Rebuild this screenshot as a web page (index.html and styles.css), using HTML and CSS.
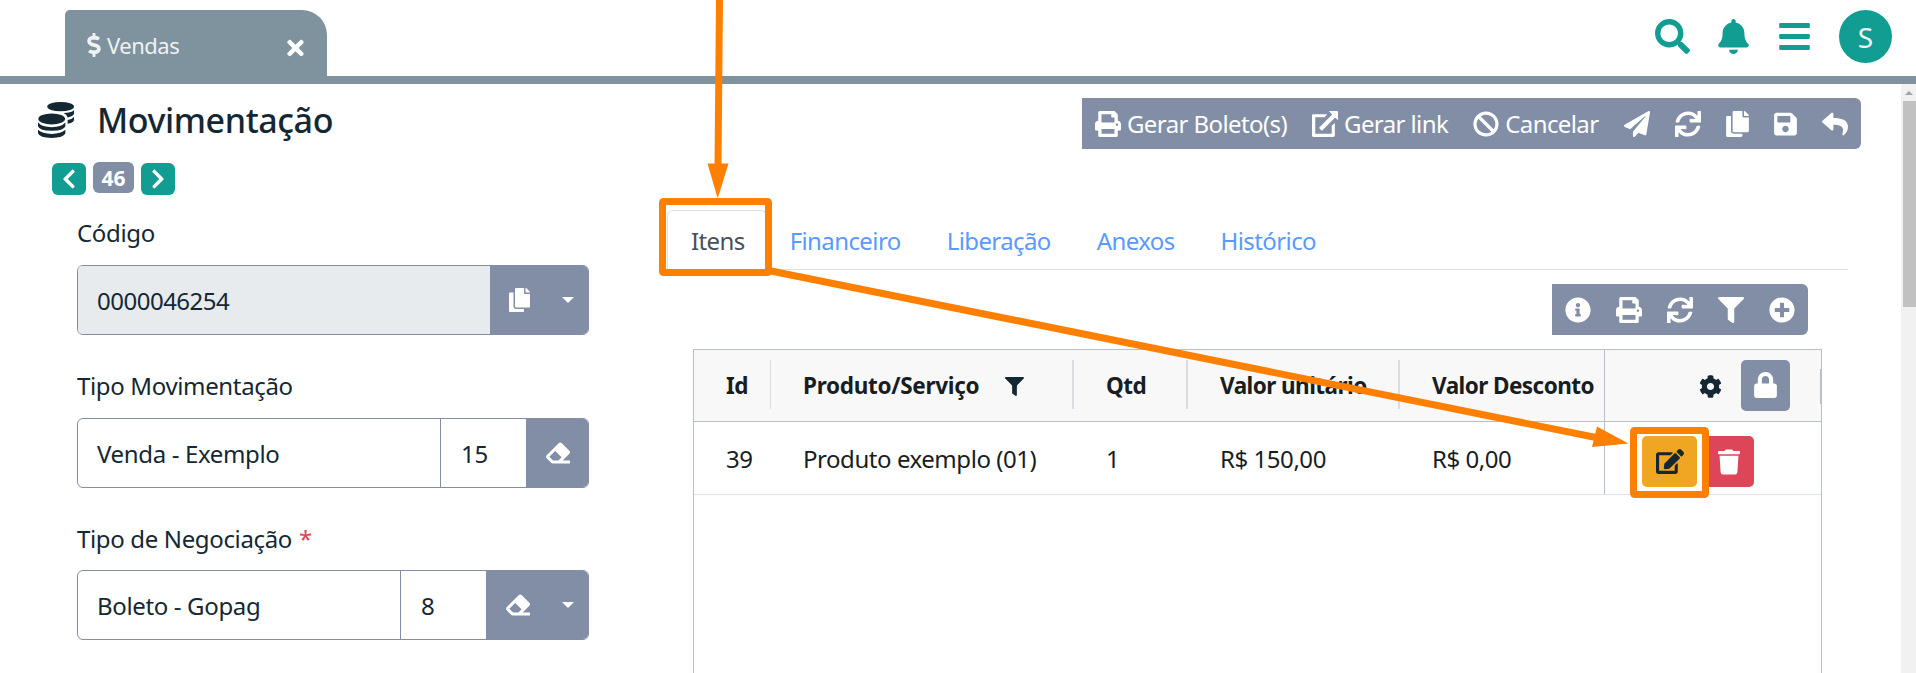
FILE: index.html
```html
<!DOCTYPE html>
<html lang="pt-BR">
<head>
<meta charset="utf-8">
<title>Movimentação</title>
<link rel="stylesheet" href="styles.css">
</head>
<body>
<svg class="sprite" width="0" height="0">
  <symbol id="search" viewBox="0 0 512 512"><path d="M505 442.7L405.3 343c-4.5-4.500-10.600-7-17-7H372c27.600-35.300 44-79.700 44-128C416 93.100 322.900 0 208 0S0 93.100 0 208s93.100 208 208 208c48.300 0 92.700-16.400 128-44v16.300c0 6.400 2.500 12.500 7 17l99.700 99.700c9.400 9.400 24.600 9.400 33.900 0l28.300-28.300c9.400-9.400 9.400-24.600.1-34zM208 336c-70.700 0-128-57.200-128-128 0-70.700 57.200-128 128-128 70.700 0 128 57.200 128 128 0 70.700-57.200 128-128 128z"/></symbol>
  <symbol id="bell" viewBox="0 0 448 512"><path d="M224 512c35.320 0 63.970-28.650 63.970-64H160.030c0 35.350 28.650 64 63.970 64zm215.390-149.710c-19.320-20.760-55.470-51.990-55.470-154.290 0-77.700-54.480-139.900-127.940-155.160V32c0-17.670-14.320-32-31.980-32s-31.980 14.330-31.980 32v20.840C118.560 68.100 64.080 130.300 64.080 208c0 102.300-36.150 133.530-55.470 154.290-6 6.450-8.660 14.160-8.610 21.710.11 16.400 12.980 32 32.100 32h383.800c19.120 0 32-15.600 32.100-32 .05-7.550-2.610-15.270-8.610-21.710z"/></symbol>
  <symbol id="bars" viewBox="0 0 448 512"><rect y="60" width="448" height="72" rx="16"/><rect y="220" width="448" height="72" rx="16"/><rect y="380" width="448" height="72" rx="16"/></symbol>
  <symbol id="times" viewBox="0 0 352 512"><path d="M242.720 256l100.070-100.070c12.280-12.280 12.280-32.190 0-44.480l-22.240-22.240c-12.280-12.280-32.190-12.280-44.480 0L176 189.280 75.930 89.210c-12.280-12.280-32.190-12.280-44.480 0L9.210 111.450c-12.280 12.280-12.280 32.190 0 44.480L109.280 256 9.210 356.070c-12.280 12.280-12.280 32.190 0 44.480l22.240 22.240c12.280 12.280 32.200 12.280 44.480 0L176 322.720l100.070 100.070c12.280 12.280 32.200 12.280 44.480 0l22.240-22.240c12.280-12.280 12.280-32.190 0-44.480L242.720 256z"/></symbol>
  <symbol id="dollar" viewBox="0 0 288 512"><path d="M209.200 233.400l-108-31.600C88.700 198.200 80 186.500 80 173.500c0-16.300 13.200-29.500 29.500-29.500h66.300c12.200 0 24.200 3.700 34.200 10.500 6.100 4.100 14.300 3.100 19.500-2l34.800-34c7.100-6.900 6.100-18.400-1.800-24.500C238 74.800 207.400 64.100 176 64V16c0-8.800-7.200-16-16-16h-32c-8.800 0-16 7.200-16 16v48h-2.500C45.800 64-5.400 118.700.5 183.600c4.200 46.100 39.400 83.600 83.800 96.600l102.500 30c12.500 3.700 21.200 15.300 21.200 28.300 0 16.300-13.200 29.500-29.500 29.500h-66.300C100 368 88 364.300 78 357.500c-6.100-4.100-14.300-3.100-19.500 2l-34.800 34c-7.100 6.900-6.100 18.400 1.800 24.500 24.500 19.200 55.100 29.900 86.500 30v48c0 8.800 7.200 16 16 16h32c8.800 0 16-7.200 16-16v-48.200c46.600-.9 90.300-28.600 105.700-72.700 21.500-61.600-14.600-124.800-72.500-141.700z"/></symbol>
  <symbol id="print" viewBox="0 0 512 512"><path d="M448 192V77.250c0-8.490-3.370-16.620-9.370-22.630L393.370 9.370c-6-6-14.140-9.370-22.630-9.370H96C78.330 0 64 14.330 64 32v160c-35.350 0-64 28.650-64 64v112c0 8.840 7.160 16 16 16h48v96c0 17.670 14.330 32 32 32h320c17.670 0 32-14.330 32-32v-96h48c8.840 0 16-7.160 16-16V256c0-35.350-28.650-64-64-64zm-64 256H128v-96h256v96zm0-224H128V64h192v48c0 8.840 7.160 16 16 16h48v96zm48 72c-13.250 0-24-10.750-24-24 0-13.260 10.750-24 24-24s24 10.740 24 24c0 13.250-10.750 24-24 24z"/></symbol>
  <symbol id="external" viewBox="0 0 512 512"><path d="M40 62H300L246 124H64V448H388V290L450 236V484Q450 512 422 512H28Q0 512 0 484V90Q0 62 28 62zM330 0H498Q512 0 512 14V182L456 128 206 378Q194 390 182 378L148 344Q136 332 148 320L398 70z"/></symbol>
  <symbol id="ban" viewBox="0 0 512 512"><path d="M256 8C119.034 8 8 119.033 8 256s111.034 248 248 248 248-111.034 248-248S392.967 8 256 8zm130.108 117.892c65.448 65.448 70 165.481 20.677 235.637L150.470 105.216c70.204-49.356 170.226-44.735 235.638 20.676zM125.892 386.108c-65.448-65.448-70-165.481-20.677-235.637L361.530 406.784c-70.203 49.356-170.226 44.736-235.638-20.676z"/></symbol>
  <symbol id="plane" viewBox="0 0 512 512"><path d="M476 3.200L12.500 270.600c-18.100 10.400-15.800 35.600 2.200 43.200L121 358.400l287.300-253.200c5.500-4.900 13.300 2.600 8.600 8.300L176 407v80.500c0 23.600 28.500 32.900 42.500 15.800L282 426l124.600 52.200c14.200 6 30.400-2.900 33-18.200l72-432C515 7.800 493.300-6.800 476 3.200z"/></symbol>
  <symbol id="sync" viewBox="0 0 512 512"><path d="M440.650 12.570l4 82.770A247.160 247.160 0 0 0 255.830 8C134.730 8 33.910 94.920 12.290 209.820A12 12 0 0 0 24.090 224h49.050a12 12 0 0 0 11.670-9.260 175.910 175.910 0 0 1 317-56.940l-101.460-4.860a12 12 0 0 0-12.570 12v47.410a12 12 0 0 0 12 12H500a12 12 0 0 0 12-12V12a12 12 0 0 0-12-12h-47.370a12 12 0 0 0-11.980 12.570zM255.830 432a175.610 175.610 0 0 1-146-77.800l101.800 4.870a12 12 0 0 0 12.570-12v-47.400a12 12 0 0 0-12-12H12a12 12 0 0 0-12 12V500a12 12 0 0 0 12 12h47.350a12 12 0 0 0 12-12.600l-4.150-82.570A247.170 247.170 0 0 0 255.830 504c121.110 0 221.930-86.920 243.550-201.820a12 12 0 0 0-11.800-14.180h-49.050a12 12 0 0 0-11.670 9.260A175.860 175.860 0 0 1 255.830 432z"/></symbol>
  <symbol id="copy" viewBox="0 0 448 512"><path d="M320 448v40c0 13.255-10.745 24-24 24H24c-13.255 0-24-10.745-24-24V120c0-13.255 10.745-24 24-24h72v296c0 30.879 25.121 56 56 56h168zm0-344V0H152c-13.255 0-24 10.745-24 24v368c0 13.255 10.745 24 24 24h272c13.255 0 24-10.745 24-24V128H344c-13.200 0-24-10.800-24-24zm120.971-31.029L375.029 7.029A24 24 0 0 0 358.059 0H352v96h96v-6.059a24 24 0 0 0-7.029-16.970z"/></symbol>
  <symbol id="save" viewBox="0 0 448 512"><path d="M433.941 129.941l-83.882-83.882A48 48 0 0 0 316.118 32H48C21.490 32 0 53.490 0 80v352c0 26.510 21.490 48 48 48h352c26.510 0 48-21.490 48-48V163.882a48 48 0 0 0-14.059-33.941zM224 416c-35.346 0-64-28.654-64-64 0-35.346 28.654-64 64-64s64 28.654 64 64c0 35.346-28.654 64-64 64zm96-304.520V212c0 6.627-5.373 12-12 12H76c-6.627 0-12-5.373-12-12V108c0-6.627 5.373-12 12-12h228.520c3.183 0 6.235 1.264 8.485 3.515l3.480 3.480A11.996 11.996 0 0 1 320 111.480z"/></symbol>
  <symbol id="reply" viewBox="0 0 512 512"><path d="M8.309 189.836L184.313 37.851C199.719 24.546 224 35.347 224 56.015v80.053c160.629 1.839 288 34.032 288 186.258 0 61.441-39.581 122.309-83.333 154.132-13.653 9.931-33.111-2.533-28.077-18.631 45.344-145.012-21.507-183.510-176.590-185.742V360c0 20.700-24.300 31.453-39.687 18.164l-176.004-152c-11.071-9.562-11.086-26.753 0-36.328z"/></symbol>
  <symbol id="filter" viewBox="0 0 512 512"><path d="M487.976 0H24.028C2.710 0-8.047 25.866 7.058 40.971L192 225.941V432c0 7.831 3.821 15.170 10.237 19.662l80 55.980C298.020 518.690 320 507.493 320 487.980V225.941l184.947-184.970C520.021 25.896 509.338 0 487.976 0z"/></symbol>
  <symbol id="info" viewBox="0 0 512 512"><path d="M256 8C119.043 8 8 119.083 8 256c0 136.997 111.043 248 248 248s248-111.003 248-248C504 119.083 392.957 8 256 8zm0 110c23.196 0 42 18.804 42 42s-18.804 42-42 42-42-18.804-42-42 18.804-42 42-42zm56 254c0 6.627-5.373 12-12 12h-88c-6.627 0-12-5.373-12-12v-24c0-6.627 5.373-12 12-12h12v-64h-12c-6.627 0-12-5.373-12-12v-24c0-6.627 5.373-12 12-12h64c6.627 0 12 5.373 12 12v100h12c6.627 0 12 5.373 12 12v24z"/></symbol>
  <symbol id="plus" viewBox="0 0 512 512"><path d="M256 8C119 8 8 119 8 256s111 248 248 248 248-111 248-248S393 8 256 8zm144 276c0 6.600-5.400 12-12 12h-92v92c0 6.600-5.400 12-12 12h-56c-6.600 0-12-5.400-12-12v-92h-92c-6.600 0-12-5.400-12-12v-56c0-6.600 5.400-12 12-12h92v-92c0-6.600 5.400-12 12-12h56c6.600 0 12 5.400 12 12v92h92c6.600 0 12 5.400 12 12v56z"/></symbol>
  <symbol id="cog" viewBox="0 0 512 512"><path d="M487.400 315.700l-42.600-24.600c4.300-23.200 4.300-47 0-70.200l42.600-24.600c4.900-2.800 7.100-8.600 5.500-14-11.100-35.600-30-67.800-54.700-94.600-3.800-4.100-10-5.100-14.800-2.300L380.800 110c-17.900-15.400-38.500-27.300-60.800-35.100V25.800c0-5.600-3.900-10.500-9.400-11.700-36.700-8.200-74.300-7.800-109.200 0-5.500 1.200-9.400 6.100-9.400 11.700V75c-22.200 7.900-42.800 19.800-60.800 35.100L88.700 85.500c-4.900-2.800-11-1.900-14.800 2.300-24.700 26.700-43.600 58.900-54.700 94.600-1.700 5.400.6 11.200 5.500 14L67.300 221c-4.300 23.200-4.300 47 0 70.200l-42.600 24.600c-4.900 2.800-7.100 8.600-5.500 14 11.100 35.600 30 67.800 54.700 94.600 3.800 4.100 10 5.100 14.800 2.300l42.600-24.600c17.900 15.400 38.500 27.300 60.800 35.100v49.200c0 5.600 3.900 10.500 9.400 11.700 36.700 8.200 74.300 7.800 109.200 0 5.500-1.200 9.400-6.100 9.400-11.700v-49.200c22.200-7.900 42.800-19.800 60.800-35.100l42.600 24.600c4.900 2.800 11 1.900 14.800-2.300 24.700-26.700 43.600-58.900 54.700-94.600 1.500-5.500-.7-11.300-5.600-14.100zM256 336c-44.100 0-80-35.900-80-80s35.900-80 80-80 80 35.900 80 80-35.900 80-80 80z"/></symbol>
  <symbol id="lock" viewBox="0 0 448 512"><path d="M400 224h-24v-72C376 68.200 307.800 0 224 0S72 68.200 72 152v72H48c-26.500 0-48 21.500-48 48v192c0 26.500 21.500 48 48 48h352c26.500 0 48-21.500 48-48V272c0-26.500-21.500-48-48-48zm-104 0H152v-72c0-39.700 32.300-72 72-72s72 32.300 72 72v72z"/></symbol>
  <symbol id="trash" viewBox="0 0 448 512"><path d="M432 32H312l-9.400-18.700A24 24 0 0 0 281.100 0H166.800a23.720 23.720 0 0 0-21.400 13.300L136 32H16A16 16 0 0 0 0 48v32a16 16 0 0 0 16 16h416a16 16 0 0 0 16-16V48a16 16 0 0 0-16-16zM32 128l21.200 339a48 48 0 0 0 47.900 45h245.800a48 48 0 0 0 47.900-45L416 128z"/></symbol>
  <symbol id="edit" viewBox="0 0 576 512"><path d="M402.600 83.200l90.200 90.200c3.800 3.800 3.800 10 0 13.800L274.400 405.600l-92.800 10.300c-12.400 1.400-22.900-9.100-21.500-21.500l10.300-92.800L388.800 83.200c3.800-3.800 10-3.800 13.800 0zm162-22.900l-48.800-48.800c-15.200-15.200-39.900-15.200-55.200 0l-35.400 35.400c-3.800 3.800-3.800 10 0 13.800l90.200 90.200c3.800 3.800 10 3.800 13.800 0l35.400-35.400c15.200-15.300 15.200-40 0-55.200zM384 346.200V448H64V128h229.800c3.200 0 6.200-1.300 8.500-3.500l40-40c7.600-7.600 2.200-20.500-8.500-20.500H48C21.500 64 0 85.500 0 112v352c0 26.500 21.500 48 48 48h352c26.500 0 48-21.500 48-48V306.200c0-10.700-12.900-16-20.500-8.500l-40 40c-2.200 2.300-3.500 5.300-3.500 8.500z"/></symbol>
  <symbol id="eraser" viewBox="0 0 512 512"><path d="M497.941 273.941c18.745-18.745 18.745-49.137 0-67.882l-160-160c-18.745-18.745-49.136-18.746-67.883 0l-256 256c-18.745 18.745-18.745 49.137 0 67.882l96 96A48.004 48.004 0 0 0 144 480h356c6.627 0 12-5.373 12-12v-40c0-6.627-5.373-12-12-12H355.883l142.058-142.059zm-302.627-62.627l137.373 137.373L265.373 416H150.628l-80-80 124.686-124.686z"/></symbol>
  <symbol id="chevron" viewBox="0 0 320 512"><path d="M34.520 239.030L228.870 44.690c9.370-9.370 24.570-9.370 33.940 0l22.670 22.670c9.360 9.360 9.370 24.520.04 33.900L131.490 256l154.020 154.750c9.340 9.380 9.320 24.540-.04 33.900l-22.670 22.670c-9.370 9.370-24.570 9.370-33.940 0L34.520 272.970c-9.370-9.370-9.370-24.570 0-33.940z"/></symbol>
  <symbol id="coins" viewBox="0 0 35 35"><ellipse cx="22" cy="4.500" rx="13" ry="4.500"/><ellipse cx="13.300" cy="16.500" rx="13" ry="5.300"/><path d="M25 10.800Q32 10.500 35 8V11.500Q34 14.200 28.800 15Q28.300 12.500 25 10.800zM28.800 17.500Q33 16.800 35 14.500V17.500Q34 20.500 28.800 21.200zM0 20Q4 24.500 13.300 24.500T26.600 20V23.500Q25 28 13.300 28T0 23.500zM0 27Q4 31 13.300 31T26.600 27V30.500Q25 35 13.300 35T0 30.500z"/></symbol>
</svg>

<header class="topbar">
  <div class="app-tab">
    <svg class="i-dollar"><use href="#dollar"/></svg>
    <span class="app-tab-name">Vendas</span>
    <svg class="i-times"><use href="#times"/></svg>
  </div>
  <div class="top-actions">
    <svg class="i-search"><use href="#search"/></svg>
    <svg class="i-bell"><use href="#bell"/></svg>
    <svg class="i-bars"><use href="#bars"/></svg>
    <span class="avatar">S</span>
  </div>
</header>

<div class="page">
  <main class="content">
    <section class="left">
      <h1 class="title"><svg class="i-coins"><use href="#coins"/></svg><span>Movimentação</span></h1>
      <div class="pager">
        <span class="page-btn"><svg class="i-chevron"><use href="#chevron"/></svg></span>
        <span class="page-count">46</span>
        <span class="page-btn"><svg class="i-chevron flip"><use href="#chevron"/></svg></span>
      </div>
      <form class="form">
        <label class="label">Código</label>
        <div class="group">
          <div class="field readonly">0000046254</div>
          <div class="addon addon-copy"><svg class="i-copy"><use href="#copy"/></svg><i class="caret"></i></div>
        </div>
        <label class="label">Tipo Movimentação</label>
        <div class="group">
          <div class="field">Venda - Exemplo</div>
          <div class="field code">15</div>
          <div class="addon addon-clear"><svg class="i-eraser"><use href="#eraser"/></svg></div>
        </div>
        <label class="label">Tipo de Negociação<span class="req">*</span></label>
        <div class="group">
          <div class="field">Boleto - Gopag</div>
          <div class="field code">8</div>
          <div class="addon addon-both"><svg class="i-eraser"><use href="#eraser"/></svg><i class="caret"></i></div>
        </div>
      </form>
    </section>

    <section class="right">
      <div class="toolbar main-tools">
        <span class="tool"><svg class="i-26"><use href="#print"/></svg><span>Gerar Boleto(s)</span></span>
        <span class="tool"><svg class="i-26"><use href="#external"/></svg><span>Gerar link</span></span>
        <span class="tool"><svg class="i-26"><use href="#ban"/></svg><span>Cancelar</span></span>
        <svg class="i-26"><use href="#plane"/></svg>
        <svg class="i-26"><use href="#sync"/></svg>
        <svg class="i-23"><use href="#copy"/></svg>
        <svg class="i-23"><use href="#save"/></svg>
        <svg class="i-26"><use href="#reply"/></svg>
      </div>
      <nav class="tabs">
        <a class="tab active">Itens</a>
        <a class="tab">Financeiro</a>
        <a class="tab">Liberação</a>
        <a class="tab">Anexos</a>
        <a class="tab">Histórico</a>
      </nav>
      <div class="toolbar grid-tools">
        <svg class="i-26"><use href="#info"/></svg>
        <svg class="i-26"><use href="#print"/></svg>
        <svg class="i-26"><use href="#sync"/></svg>
        <svg class="i-26"><use href="#filter"/></svg>
        <svg class="i-26"><use href="#plus"/></svg>
      </div>
      <div class="grid">
        <div class="grid-row grid-head">
          <div class="cell thin">Id</div>
          <div class="cell product">Produto/Serviço<svg class="i-filter"><use href="#filter"/></svg></div>
          <div class="cell">Qtd</div>
          <div class="cell">Valor unitário</div>
          <div class="cell last">Valor Desconto</div>
          <div class="cell actions head-actions"><svg class="i-cog"><use href="#cog"/></svg><span class="lock-btn"><svg class="i-lock"><use href="#lock"/></svg></span><i class="edge"></i></div>
        </div>
        <div class="grid-row grid-data">
          <div class="cell">39</div>
          <div class="cell">Produto exemplo (01)</div>
          <div class="cell">1</div>
          <div class="cell">R$ 150,00</div>
          <div class="cell last">R$ 0,00</div>
          <div class="cell actions"><span class="edit-btn"><svg class="i-edit"><use href="#edit"/></svg></span><span class="trash-btn"><svg class="i-trash"><use href="#trash"/></svg></span></div>
        </div>
      </div>
    </section>
  </main>
  <div class="scrollbar"><i class="scroll-up"></i><i class="scroll-thumb"></i></div>
</div>

<svg class="guide" viewBox="0 0 1916 673">
  <path class="guide-line" d="M719.500 -2L718 165M771 271L1596 437.500"/>
  <path class="guide-head" d="M707.500 163.500H728.500L717.700 198.500zM1597 426.500L1592 447L1628.500 443.500z"/>
  <rect class="guide-box" x="662.500" y="201.500" width="106" height="71" rx="1"/>
  <rect class="guide-box" x="1633.500" y="430.500" width="72" height="64" rx="1"/>
</svg>
</body>
</html>
```
FILE: styles.css
```css
* { box-sizing: border-box; }
body {
  margin: 0;
  width: 1916px;
  height: 673px;
  overflow: hidden;
  position: relative;
  background: #fff;
  color: #142833;
  font-family: "Noto Sans", "Open Sans", sans-serif;
  font-size: 24px;
  line-height: 36px;
}
svg { display: block; fill: currentColor; flex: none; }
span, .cell { white-space: nowrap; }
.sprite { position: absolute; }

.topbar {
  height: 84px;
  border-bottom: 8px solid #7e939e;
  display: flex;
  justify-content: space-between;
  padding: 10px 24px 0 65px;
}
.app-tab {
  width: 262px;
  height: 66px;
  background: #7e939e;
  border-radius: 5px 25px 0 0;
  color: #f0f1f2;
  display: flex;
  align-items: center;
  padding: 4px 23px 0 22px;
}
.app-tab-name { margin-left: 6px; font-size: 22px; letter-spacing: -0.5px; }
.i-dollar { width: 14px; height: 24px; }
.i-times { width: 17px; height: 24px; color: #fff; margin-left: auto; margin-top: 6px; }
.top-actions { display: flex; align-items: flex-start; color: #129d93; }
.i-search { width: 35px; height: 35px; margin: 9px 28px 0 0; }
.i-bell { width: 31px; height: 35px; margin: 9px 30px 0 0; }
.i-bars { width: 31px; height: 35px; margin: 9px 29px 0 0; }
.avatar {
  width: 53px;
  height: 53px;
  border-radius: 50%;
  background: #129d93;
  color: #f0f1f2;
  font-size: 28px;
  line-height: 54px;
  text-align: center;
}

.page { display: flex; height: 589px; }
.content { flex: 1; display: flex; }
.left { width: 660px; padding: 18px 0 0 38px; }
.title { display: flex; align-items: center; margin: 0; height: 35px; font-size: 34px; font-weight: 500; letter-spacing: -0.4px; }
.i-coins { width: 36px; height: 36px; margin-right: 23px; }
.pager { display: flex; gap: 7px; padding: 25px 0 0 14px; }
.page-btn {
  width: 34px;
  height: 32px;
  margin-top: 1px;
  border-radius: 6px;
  background: #129d93;
  color: #fff;
  display: flex;
  align-items: center;
  justify-content: center;
}
.i-chevron { width: 14px; height: 22px; }
.flip { transform: scaleX(-1); }
.page-count {
  width: 41px;
  height: 31px;
  border-radius: 6px;
  background: #828ea6;
  color: #fff;
  font-size: 21px;
  font-weight: 700;
  line-height: 33px;
  text-align: center;
}
.form { padding: 19px 0 0 39px; letter-spacing: -0.35px; }
.label { display: block; height: 51px; padding-top: 1px; }
.req { color: #dd4558; margin-left: 7px; }
.group {
  width: 512px;
  height: 70px;
  margin-bottom: 32px;
  border: 1px solid #828ea6;
  border-radius: 6px;
  overflow: hidden;
  display: flex;
}
.group:last-child { margin-top: -1px; }
.field { flex: 1; display: flex; align-items: center; padding-left: 19px; padding-top: 2px; }
.readonly { background: #e8ebed; letter-spacing: -0.5px; }
.code { flex: none; width: 86px; border-left: 1px solid #828ea6; padding-left: 20px; }
.addon { background: #828ea6; color: #fff; display: flex; align-items: center; padding-left: 20px; }
.addon-copy { width: 98px; padding-left: 19px; }
.addon-clear { width: 62px; }
.addon-both { width: 102px; }
.i-copy { width: 21px; height: 24px; }
.i-eraser { width: 24px; height: 24px; }
.caret { border: 6px solid transparent; border-top-color: #fff; border-bottom: 0; margin-left: 32px; }

.right { flex: 1; padding-top: 14px; display: flex; flex-direction: column; }
.toolbar {
  flex: none;
  align-self: flex-end;
  height: 51px;
  background: #828ea6;
  color: #fff;
  border-radius: 0 6px 6px 0;
  display: flex;
  align-items: center;
  justify-content: space-between;
  padding: 0 13px;
  letter-spacing: -0.6px;
}
.main-tools { width: 779px; margin-right: 40px; }
.grid-tools { width: 256px; margin: 14px 93px 0 0; }
.tool { display: flex; align-items: center; gap: 6px; }
.i-26 { width: 26px; height: 26px; }
.i-23 { width: 23px; height: 26px; }
.tabs { flex: none; display: flex; margin: 61px 53px 0 7px; height: 60px; border-bottom: 1px solid #dee0e6; letter-spacing: -0.6px; }
.tab { height: 59px; padding: 12px 22px 0; border: 1px solid transparent; border-bottom: 0; color: #5a9afc; }
.active { height: 60px; padding-left: 23px; padding-right: 21px; color: #495057; border-color: #dee0ea; border-radius: 6px 6px 0 0; background: #fff; }

.grid {
  flex: none;
  width: 1129px;
  height: 340px;
  margin: 14px 0 0 33px;
  border: 1px solid #babfc7;
  border-bottom: 0;
}
.grid-row {
  display: grid;
  grid-template-columns: 77px 303px 114px 212px 205px 1fr;
  height: 73px;
  border-bottom: 1px solid #dde2eb;
  color: #181d1f;
  letter-spacing: -0.45px;
}
.grid-head { height: 72px; background: #f8f8f8; border-bottom-color: #babfc7; font-weight: 700; font-size: 22.500px; letter-spacing: -0.55px; }
.cell { display: flex; align-items: center; padding-left: 32px; }
.grid-data .cell { padding-top: 2px; }
.grid-head .cell { background: linear-gradient(#d9dce0, #d9dce0) right 10px / 2px 49px no-repeat; padding-top: 1px; }
.grid-head .thin { background-size: 1px 49px; }
.grid-head .last, .grid-head .actions { background: none; }
.product { letter-spacing: -0.3px; }
.last { border-right: 1px solid #babfc7; }
.grid-row .actions { padding-left: 37px; color: #142833; }
.grid-data .actions { padding-top: 7px; }
.i-filter { width: 19px; height: 19px; margin-left: 26px; color: #142833; }
.grid-row .head-actions { padding-left: 94px; }
.i-cog { width: 23px; height: 23px; }
.lock-btn { width: 49px; height: 51px; margin: 0 0 2px 19px; border-radius: 5px; background: #828ea6; color: #fff; display: flex; align-items: center; justify-content: center; }
.i-lock { width: 23px; height: 26px; }
.edge { width: 1px; height: 35px; margin-left: 30px; background: #babfc7; }
.edit-btn { width: 55px; height: 51px; border-radius: 5px; background: #f0a523; display: flex; align-items: center; justify-content: center; }
.trash-btn { width: 50px; height: 51px; margin-left: 7px; border-radius: 5px; background: #dd4558; color: #fff; display: flex; align-items: center; justify-content: center; }
.i-edit { width: 28px; height: 25px; }
.i-trash { width: 22px; height: 26px; }

.scrollbar { width: 15px; background: #f1f1f1; display: flex; flex-direction: column; align-items: flex-end; }
.scroll-up { border: 4px solid transparent; border-bottom-color: #a3a3a3; border-top: 0; margin: 7px 3px 6px 0; }
.scroll-thumb { width: 13px; height: 206px; background: #c1c1c1; }

.guide { position: absolute; left: 0; top: 0; width: 1916px; height: 673px; fill: none; pointer-events: none; }
.guide-line { stroke: #ff8000; stroke-width: 7; }
.guide-head { fill: #ff8000; }
.guide-box { stroke: #ff8000; stroke-width: 7; stroke-linejoin: round; }
```
